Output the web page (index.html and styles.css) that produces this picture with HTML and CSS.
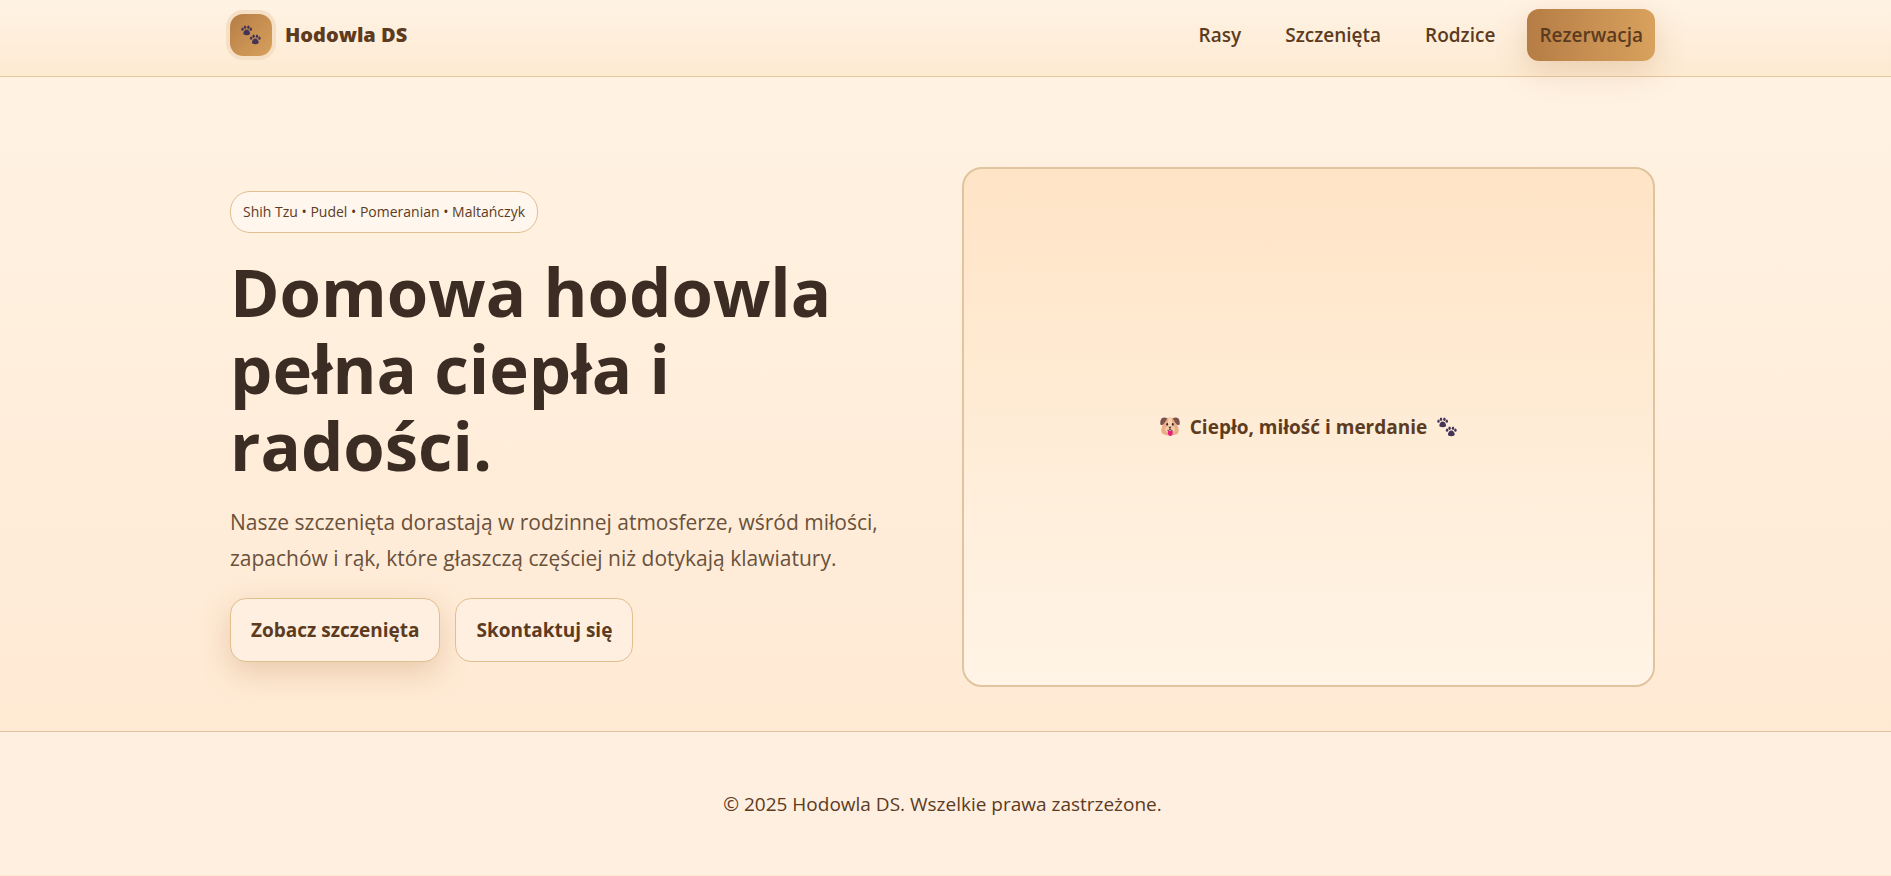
FILE: index.html
```
<!DOCTYPE html>
<html lang="pl">
<head>
    <meta charset="UTF-8">
    <meta name="viewport" content="width=device-width, initial-scale=1.0">
    <title>Hodowla DS</title>
    <link rel="stylesheet" href="styles.css">
</head>
<body>

<svg class="sprite" aria-hidden="true">
    <symbol id="paws" viewBox="0 0 20 20">
        <g id="paw">
            <ellipse cx="1.5" cy="4.2" rx="1.2" ry="1.6"/>
            <ellipse cx="4" cy="2.2" rx="1.2" ry="1.7"/>
            <ellipse cx="7.4" cy="2.2" rx="1.2" ry="1.7"/>
            <ellipse cx="9.8" cy="4.2" rx="1.2" ry="1.6"/>
            <path d="M5.7 4.6C7.6 4.6 9 6.8 9 8.3C9 9.8 8 10.2 5.7 10.2C3.4 10.2 2.4 9.8 2.4 8.3C2.4 6.8 3.8 4.6 5.7 4.6Z"/>
        </g>
        <use href="#paw" x="8.6" y="9"/>
    </symbol>
</svg>

<header class="header">
    <div class="container header-inner">
        <a href="#" class="brand">
            <span class="logo"><svg class="paws" aria-hidden="true"><use href="#paws"/></svg></span>
            <span>Hodowla DS</span>
        </a>
        <nav class="nav">
            <a href="#rasy">Rasy</a>
            <a href="#szczenieta">Szczenięta</a>
            <a href="#rodzice">Rodzice</a>
            <a href="#rezerwacja" class="cta">Rezerwacja</a>
        </nav>
    </div>
</header>

<main class="container hero">
    <div class="hero-text">
        <span class="badge">Shih Tzu • Pudel • Pomeranian • Maltańczyk</span>
        <h1>Domowa hodowla pełna ciepła i radości.</h1>
        <p class="lead">Nasze szczenięta dorastają w rodzinnej atmosferze, wśród miłości, zapachów i rąk, które głaszczą częściej niż dotykają klawiatury.</p>
        <div class="buttons">
            <a href="#szczenieta" class="btn btn-primary">Zobacz szczenięta</a>
            <a href="#kontakt" class="btn">Skontaktuj się</a>
        </div>
    </div>
    <div class="hero-card">
        <svg class="dog" viewBox="0 0 20 20" aria-hidden="true">
            <path d="M4 2Q10 -1 16 2L18 10Q20 15 17 17Q10 20 3 17Q0 15 2 10Z" fill="#eaae86"/>
            <path d="M8.5 1h3l1 8h-5z" fill="#f8d3b0"/>
            <path d="M1.5 1.5Q4 -.5 7.2 1.2Q6 4 4 6.5Q2 9 .4 7.5Q-.2 4 1.5 1.5Z" fill="#7b524c"/>
            <path d="M18.5 1.5Q16 -.5 12.8 1.2Q14 4 16 6.5Q18 9 19.6 7.5Q20.2 4 18.5 1.5Z" fill="#7b524c"/>
            <ellipse cx="10" cy="12.3" rx="5" ry="3.6" fill="#f8cba8"/>
            <path d="M8 14h4.6V17Q12 19 10.3 19T8 17Z" fill="#e61e84"/>
            <ellipse cx="7.2" cy="7.3" rx=".9" ry="1.4" fill="#3a2630"/>
            <ellipse cx="12.8" cy="7.3" rx=".9" ry="1.4" fill="#3a2630"/>
            <path d="M8.4 9.8h3.2L10 11.6Z" fill="#3a2630"/>
            <path d="M7.4 13.4Q9.6 14.2 10 11.5Q10.4 14.2 12.6 13.4" fill="none" stroke="#4a2b2a" stroke-width=".8"/>
        </svg>
        <span>Ciepło, miłość i merdanie</span>
        <svg class="paws" aria-hidden="true"><use href="#paws"/></svg>
    </div>
</main>

<footer class="footer">
    <div class="container">© 2025 Hodowla DS. Wszelkie prawa zastrzeżone.</div>
</footer>

</body>
</html>
```
FILE: styles.css
```
* {
    box-sizing: border-box;
}
body {
    margin: 0;
    min-height: 100vh;
    font-family: "Segoe UI", "Open Sans", "Noto Sans", sans-serif;
    font-size: 19px;
    line-height: 32px;
    color: #5c3b1e;
    background: linear-gradient(#fff3e4, #ffe8d1);
}
a {
    color: inherit;
    text-decoration: none;
}
.sprite {
    position: absolute;
    width: 0;
    height: 0;
}
.container {
    max-width: 1511px;
    margin: 0 auto;
    padding: 0 46px 0 40px;
}
.header {
    background: linear-gradient(#fff3e4, #fdead2);
    border-bottom: 1px solid #e6c69c;
}
.header-inner {
    display: flex;
    justify-content: space-between;
    align-items: center;
    padding-top: 9px;
    padding-bottom: 15px;
}
.brand {
    display: flex;
    align-items: center;
    gap: 13px;
    font-size: 20px;
    font-weight: 800;
}
.logo {
    display: flex;
    align-items: center;
    justify-content: center;
    width: 42px;
    height: 42px;
    border-radius: 13px;
    background: linear-gradient(135deg, #b57d45, #d9a15d);
    box-shadow: 0 0 0 4px #f5dfc5;
}
.paws {
    width: 20px;
    height: 20px;
    fill: #443458;
}
.nav {
    display: flex;
    gap: 20px;
    font-weight: 600;
}
.nav a {
    padding: 10px 12px;
    border-radius: 12px;
}
.nav .cta {
    background: linear-gradient(90deg, #b57d45, #d9a15d);
    box-shadow: 0 10px 30px rgba(181, 125, 69, 0.25);
}
.hero {
    display: grid;
    grid-template-columns: 1fr 1fr;
    gap: 39px;
    align-items: center;
    padding-top: 90px;
    padding-bottom: 44px;
}
.hero-text {
    display: flex;
    flex-direction: column;
    align-items: flex-start;
}
.badge {
    padding: 4px 12px;
    border: 1px solid #dfc08f;
    border-radius: 20px;
    background: #fff6ed;
    font-size: 14px;
}
h1 {
    margin: 20px 0;
    font-size: 67px;
    line-height: 77px;
    color: #3c2d24;
}
.lead {
    margin: 0 0 22px;
    font-size: 21px;
    line-height: 36px;
    color: #69513c;
}
.buttons {
    display: flex;
    gap: 15px;
}
.btn {
    padding: 15px 20px;
    border: 1px solid #e0bf8f;
    border-radius: 16px;
    background: #ffefe0;
    font-weight: 700;
}
.btn-primary {
    box-shadow: 0 10px 30px rgba(181, 125, 69, 0.3);
}
.hero-card {
    display: flex;
    align-items: center;
    justify-content: center;
    gap: 10px;
    aspect-ratio: 4 / 3;
    border: 2px solid #e0c4a0;
    border-radius: 20px;
    background: linear-gradient(#ffe4c6, #fff4e6);
    font-weight: 700;
}
.dog {
    width: 20px;
    height: 20px;
}
.footer {
    padding: 56px 0 55px;
    border-top: 1px solid #e0c4a0;
    background: #ffefe0;
    text-align: center;
}

@media (max-width: 900px) {
    .hero {
        grid-template-columns: 1fr;
    }
}
```
